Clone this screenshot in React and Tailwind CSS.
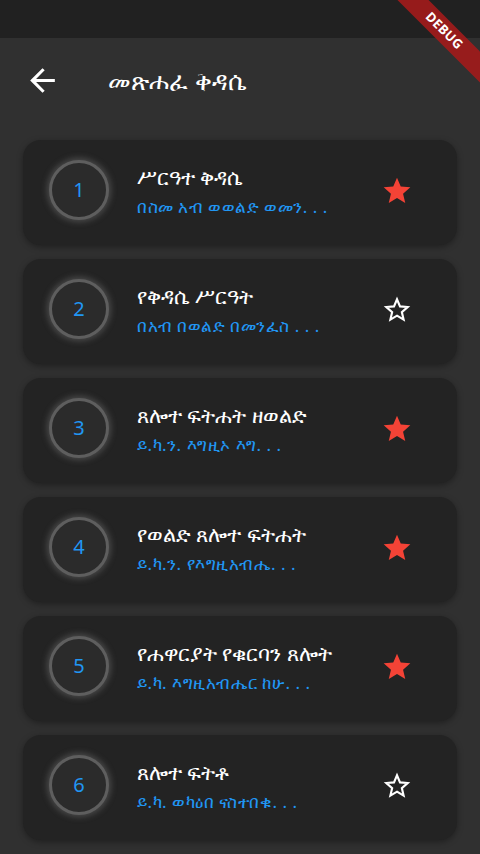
import React from 'react';

const items = [
  { n: 1, title: 'ሥርዓተ ቅዳሴ', sub: 'በስመ አብ ወወልድ ወመን. . .', fav: true },
  { n: 2, title: 'የቅዳሴ ሥርዓት', sub: 'በአብ በወልድ በመንፈስ . . .', fav: false },
  { n: 3, title: 'ጸሎተ ፍትሐት ዘወልድ', sub: 'ይ.ካ.ን.  እግዚኦ እግ. . .', fav: true },
  { n: 4, title: 'የወልድ ጸሎተ ፍትሐት', sub: 'ይ.ካ.ን.  የእግዚአብሔ. . .', fav: true },
  { n: 5, title: 'የሐዋርያት የቁርባን ጸሎት', sub: 'ይ.ካ. እግዚአብሔር ከሁ. . .', fav: true },
  { n: 6, title: 'ጸሎተ ፍትቶ', sub: 'ይ.ካ. ወካዕበ ናስተበቁ. . .', fav: false },
];

const Star = ({ filled }) => (
  <svg className="-mt-[4px]" width="32" height="32" viewBox="0 0 24 24">
    <path
      d="M12 17.27L18.18 21l-1.64-7.03L22 9.24l-7.19-.61L12 2 9.19 8.63 2 9.24l5.46 4.73L5.82 21z"
      fill={filled ? '#f44336' : 'none'}
      stroke={filled ? 'none' : '#ffffff'}
      strokeWidth={filled ? 0 : 2}
      strokeLinejoin="miter"
      transform={filled ? '' : 'translate(2.4 2.4) scale(0.8)'}
    />
  </svg>
);

export default function App() {
  return (
    <div
      className="relative w-[480px] h-[854px] overflow-hidden bg-[#303030]"
      style={{ fontFamily: '"Noto Sans", "DejaVu Sans", Roboto, sans-serif' }}
    >
      <div className="h-[38px] bg-[#212121]" />
      <div className="h-[84px] flex items-center">
        <svg className="ml-[24px]" width="37" height="37" viewBox="0 0 24 24">
          <path d="M20 11H7.83l5.59-5.59L12 4l-8 8 8 8 1.41-1.41L7.83 13H20v-2z" fill="#ffffff" />
        </svg>
        <span className="ml-[47px] text-[25px] leading-[30px] text-white">መጽሐፈ ቅዳሴ</span>
      </div>

      <div className="flex flex-col gap-[14px] px-[23px] pt-[18px]">
        {items.map((it) => (
          <div
            key={it.n}
            className="h-[105px] rounded-[18px] bg-[#232323] shadow-[0_2px_6px_rgba(0,0,0,0.35)] flex items-center pl-[26px] pr-[44px]"
          >
            <div className="w-[60px] h-[60px] -mt-[5px] rounded-full bg-[#2b2b2b] border-[3px] border-[#5e5e5e] shadow-[0_0_6px_2px_rgba(150,150,150,0.35)] flex items-center justify-center shrink-0">
              <span className="text-[20px] text-[#2196f3]">{it.n}</span>
            </div>
            <div className="ml-[28px] flex-1 flex flex-col -mt-[3px]">
              <span className="text-[21px] leading-[28px] text-white">{it.title}</span>
              <span className="text-[17px] leading-[24px] mt-[4px] text-[#2196f3] tracking-[0.5px]">{it.sub}</span>
            </div>
            <Star filled={it.fav} />
          </div>
        ))}
      </div>

      <div className="absolute top-[20px] right-[-34px] w-[140px] h-[22px] rotate-45 bg-[#a31b1b]/90 flex items-center justify-center">
        <span className="text-[13px] font-bold text-white tracking-[0.3px]">DEBUG</span>
      </div>
    </div>
  );
}
